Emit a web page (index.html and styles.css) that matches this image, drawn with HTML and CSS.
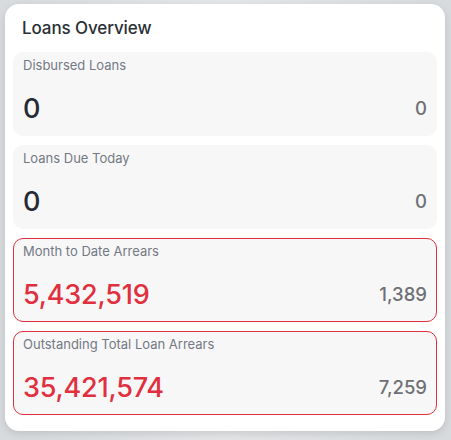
FILE: index.html
```html
<!DOCTYPE html>
<html>
<head>
<meta charset="utf-8">
<link rel="stylesheet" href="styles.css">
</head>
<body>
<div class="card">
  <h2 class="title">Loans Overview</h2>
  <div class="list">
    <div class="stat">
      <div class="label">Disbursed Loans</div>
      <div class="row"><span class="value">0</span><span class="count">0</span></div>
    </div>
    <div class="stat">
      <div class="label">Loans Due Today</div>
      <div class="row"><span class="value">0</span><span class="count">0</span></div>
    </div>
    <div class="stat alert">
      <div class="label">Month to Date Arrears</div>
      <div class="row"><span class="value">5,432,519</span><span class="count">1,389</span></div>
    </div>
    <div class="stat alert">
      <div class="label">Outstanding Total Loan Arrears</div>
      <div class="row"><span class="value">35,421,574</span><span class="count">7,259</span></div>
    </div>
  </div>
</div>
</body>
</html>
```
FILE: styles.css
```css
html, body { margin: 0; padding: 0; }
body {
  width: 451px;
  height: 440px;
  background: linear-gradient(90deg, #d8dbde 0%, #e4e6e8 50%, #d8dbde 100%);
  font-family: Inter, "Noto Sans", sans-serif;
  padding: 4px 6px 0 5px;
  box-sizing: border-box;
}
.card {
  background: #fff;
  border-radius: 14px;
  box-shadow: 0 3px 8px rgba(0,0,0,0.12);
  padding: 0 8px 15px 8px;
  height: 427px;
  box-sizing: border-box;
}
.title {
  margin: 0;
  font-size: 17px;
  font-weight: 500;
  color: #2b2f36;
  line-height: 48px;
  padding-left: 9px;
  letter-spacing: -0.1px;
}
.list {
  display: flex;
  flex-direction: column;
  gap: 9px;
}
.stat {
  background: #f7f7f7;
  border-radius: 10px;
  height: 84px;
  box-sizing: border-box;
  padding: 4px 9px 0 9px;
  border: 1px solid #f7f7f7;
  display: flex;
  flex-direction: column;
}
.stat.alert {
  border-color: #e0303f;
}
.label {
  font-size: 13px;
  color: #737984;
  line-height: 16px;
}
.row {
  margin-top: auto;
  display: flex;
  justify-content: space-between;
  align-items: baseline;
  padding-bottom: 11px;
}
.value {
  font-size: 27px;
  font-weight: 500;
  color: #262b33;
  line-height: 30px;
  letter-spacing: -0.2px;
}
.alert .value { color: #e0303f; }
.count {
  font-size: 18.5px;
  font-weight: 500;
  color: #6e7075;
  position: relative;
  top: -3px;
}
```
